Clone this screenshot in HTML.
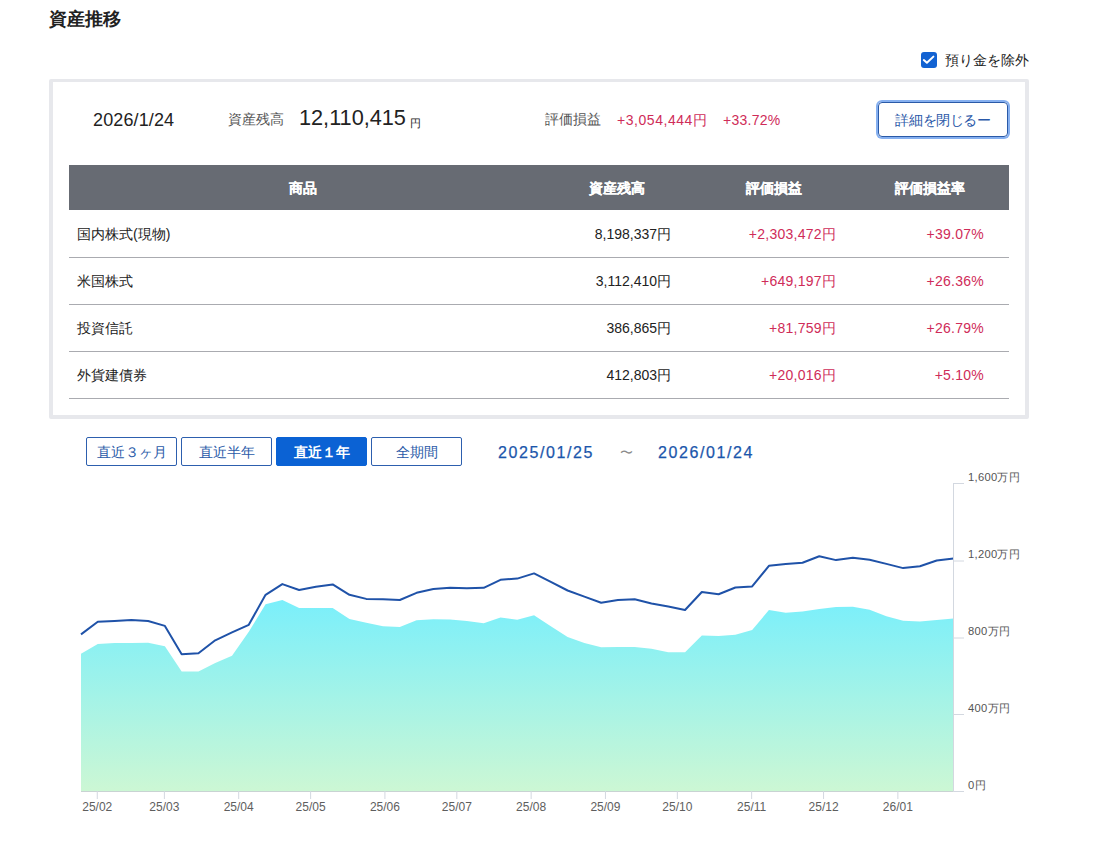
<!DOCTYPE html>
<html lang="ja"><head><meta charset="utf-8"><title>資産推移</title>
<style>
html,body{margin:0;padding:0;background:#fff;}
body{width:1095px;height:852px;position:relative;overflow:hidden;font-family:"Liberation Sans",sans-serif;color:#222;}
.a{position:absolute;white-space:nowrap;}
.title{left:49px;top:6px;font-size:18px;font-weight:bold;line-height:26px;color:#222;}
.chk{left:921px;top:52px;width:16px;height:15.6px;border-radius:3px;background:#1262d2;}
.chkl{left:945px;top:50px;font-size:14px;line-height:20px;color:#222;}
.card{left:49px;top:79px;width:972px;height:333px;border:4px solid #e7e8ec;border-top-width:3px;border-radius:2px;}
.date{left:93px;top:109px;font-size:18px;line-height:22px;color:#222;letter-spacing:0.12px;}
.lbl{font-size:14px;line-height:20px;color:#555;}
.big{left:299px;top:105px;font-size:21.7px;line-height:26px;color:#222;}
.yen{left:410px;top:115px;font-size:11px;line-height:16px;color:#222;}
.red{color:#cf2c59;font-size:14px;line-height:20px;letter-spacing:0.25px;}
.btn{left:878px;top:102px;width:128px;height:33px;border:1px solid #2a5aa8;border-radius:4px;box-shadow:0 0 0 2px #86b0f0;color:#2a58a8;font-size:14px;line-height:34px;letter-spacing:-0.35px;text-align:center;}
.thead{left:69px;top:165px;width:940px;height:45px;background:#676b73;}
.th{top:177.5px;color:#fff;font-weight:bold;font-size:14px;line-height:20px;-webkit-text-stroke:0.15px #fff;}
.row{left:69px;width:940px;height:1px;background:#aaabb0;}
.td{font-size:14px;line-height:20px;color:#222;}
.r{text-align:right;}
.pb{top:437px;width:89px;height:27px;border:1px solid #2d5fae;border-radius:2px;font-size:14px;line-height:28px;text-align:center;color:#2a5aa8;}
.pb.on{background:#0b62d4;border-color:#0b62d4;color:#fff;font-weight:bold;}
.dt{top:442.5px;font-size:16px;line-height:20px;color:#1b56ab;letter-spacing:1.6px;-webkit-text-stroke:0.25px #1b56ab;}
.xl{top:798.5px;width:60px;text-align:center;font-size:12px;line-height:16px;color:#5e5e5e;}
.yl{left:968px;font-size:11.2px;line-height:14px;color:#555;letter-spacing:0.3px;}
</style></head><body>
<div class="a title">資産推移</div>
<div class="a chk"><svg width="16" height="16" viewBox="0 0 16 16" style="display:block"><path d="M2.8 8.1 L5.9 10.8 L12.4 4.6" fill="none" stroke="#fff" stroke-width="2" stroke-linecap="round" stroke-linejoin="round"/></svg></div>
<div class="a chkl">預り金を除外</div>
<div class="a card"></div>
<div class="a date">2026/1/24</div>
<div class="a lbl" style="left:228px;top:109px">資産残高</div>
<div class="a big">12,110,415</div>
<div class="a yen">円</div>
<div class="a lbl" style="left:545px;top:109px">評価損益</div>
<div class="a red" style="left:617px;top:110px;letter-spacing:0.55px">+3,054,444円</div>
<div class="a red" style="left:723px;top:110px">+33.72%</div>
<div class="a btn">詳細を閉じるー</div>
<div class="a thead"></div>
<div class="a th" style="left:69px;width:468px;text-align:center">商品</div>
<div class="a th" style="left:537px;width:159px;text-align:center">資産残高</div>
<div class="a th" style="left:696px;width:155px;text-align:center">評価損益</div>
<div class="a th" style="left:851px;width:158px;text-align:center">評価損益率</div>
<div class="a td" style="left:77px;top:223.5px">国内株式(現物)</div><div class="a td r" style="right:424px;top:223.5px">8,198,337円</div><div class="a red r" style="right:259px;top:223.5px">+2,303,472円</div><div class="a red r" style="right:111px;top:223.5px">+39.07%</div><div class="a row" style="top:257px"></div>
<div class="a td" style="left:77px;top:270.5px">米国株式</div><div class="a td r" style="right:424px;top:270.5px">3,112,410円</div><div class="a red r" style="right:259px;top:270.5px">+649,197円</div><div class="a red r" style="right:111px;top:270.5px">+26.36%</div><div class="a row" style="top:304px"></div>
<div class="a td" style="left:77px;top:317.5px">投資信託</div><div class="a td r" style="right:424px;top:317.5px">386,865円</div><div class="a red r" style="right:259px;top:317.5px">+81,759円</div><div class="a red r" style="right:111px;top:317.5px">+26.79%</div><div class="a row" style="top:351px"></div>
<div class="a td" style="left:77px;top:364.5px">外貨建債券</div><div class="a td r" style="right:424px;top:364.5px">412,803円</div><div class="a red r" style="right:259px;top:364.5px">+20,016円</div><div class="a red r" style="right:111px;top:364.5px">+5.10%</div><div class="a row" style="top:398px"></div>
<div class="a pb" style="left:86px">直近３ヶ月</div>
<div class="a pb" style="left:181px">直近半年</div>
<div class="a pb on" style="left:276px">直近１年</div>
<div class="a pb" style="left:371px">全期間</div>
<div class="a dt" style="left:498px">2025/01/25</div>
<div class="a" style="left:620px;top:443px;font-size:13px;line-height:20px;color:#8a8a8a">〜</div>
<div class="a dt" style="left:658px">2026/01/24</div>
<svg class="a" style="left:0;top:0" width="1095" height="852" viewBox="0 0 1095 852">
<defs><linearGradient id="g" x1="0" y1="600" x2="0" y2="791" gradientUnits="userSpaceOnUse">
<stop offset="0" stop-color="#7aeffb"/><stop offset="1" stop-color="#ccf7d4"/></linearGradient></defs>
<polygon points="81.00,791 81.00,653.8 97.78,643.9 114.56,643.1 131.34,643.1 148.12,642.8 164.89,646.2 181.67,671.6 198.45,671.6 215.23,663.0 232.01,655.8 248.79,631.7 265.57,604.2 282.35,600.0 299.12,608.0 315.90,608.0 332.68,608.0 349.46,619.0 366.24,622.8 383.02,626.3 399.80,627.1 416.58,620.2 433.36,619.2 450.13,619.5 466.91,621.0 483.69,623.3 500.47,617.6 517.25,619.8 534.03,615.2 550.81,626.3 567.59,637.0 584.37,643.1 601.14,647.2 617.92,646.9 634.70,646.9 651.48,648.8 668.26,652.3 685.04,652.3 701.82,635.5 718.60,636.0 735.38,634.8 752.15,629.9 768.93,610.1 785.71,612.7 802.49,611.6 819.27,609.0 836.05,607.0 852.83,606.8 869.61,609.7 886.38,616.2 903.16,620.7 919.94,621.5 936.72,620.0 953.50,618.5 953.50,791" fill="url(#g)"/>
<polyline points="81.00,634.4 97.78,621.8 114.56,620.9 131.34,619.9 148.12,621.0 164.89,625.9 181.67,654.3 198.45,653.3 215.23,640.3 232.01,632.4 248.79,624.8 265.57,594.8 282.35,584.1 299.12,590.0 315.90,586.7 332.68,584.4 349.46,594.8 366.24,598.9 383.02,599.3 399.80,600.0 416.58,592.8 433.36,589.0 450.13,587.8 466.91,588.2 483.69,587.8 500.47,579.8 517.25,578.6 534.03,573.4 550.81,581.8 567.59,590.5 584.37,596.6 601.14,602.8 617.92,600.0 634.70,599.3 651.48,603.5 668.26,606.5 685.04,610.0 701.82,592.0 718.60,594.3 735.38,587.5 752.15,586.4 768.93,565.8 785.71,563.9 802.49,562.8 819.27,556.2 836.05,560.1 852.83,557.8 869.61,559.7 886.38,563.9 903.16,568.1 919.94,566.3 936.72,560.5 953.50,558.4" fill="none" stroke="#1f52a8" stroke-width="2" stroke-linejoin="round"/>
<g stroke="#d3d8e0" stroke-width="1">
<line x1="953.5" y1="483" x2="953.5" y2="791.5"/>
<line x1="81" y1="791.5" x2="953.5" y2="791.5" stroke="#c9d3d3"/>
<line x1="97.28" y1="791" x2="97.28" y2="799" /><line x1="164.39" y1="791" x2="164.39" y2="799" /><line x1="238.70" y1="791" x2="238.70" y2="799" /><line x1="310.61" y1="791" x2="310.61" y2="799" /><line x1="384.92" y1="791" x2="384.92" y2="799" /><line x1="456.83" y1="791" x2="456.83" y2="799" /><line x1="531.13" y1="791" x2="531.13" y2="799" /><line x1="605.44" y1="791" x2="605.44" y2="799" /><line x1="677.35" y1="791" x2="677.35" y2="799" /><line x1="751.65" y1="791" x2="751.65" y2="799" /><line x1="823.56" y1="791" x2="823.56" y2="799" /><line x1="897.87" y1="791" x2="897.87" y2="799" /><line x1="953.5" y1="483.5" x2="964" y2="483.5" /><line x1="953.5" y1="561.0" x2="964" y2="561.0" /><line x1="953.5" y1="638.0" x2="964" y2="638.0" /><line x1="953.5" y1="714.5" x2="964" y2="714.5" /><line x1="953.5" y1="791.5" x2="964" y2="791.5" />
</g></svg>
<div class="a xl" style="left:67.28px">25/02</div><div class="a xl" style="left:134.39px">25/03</div><div class="a xl" style="left:208.70px">25/04</div><div class="a xl" style="left:280.61px">25/05</div><div class="a xl" style="left:354.92px">25/06</div><div class="a xl" style="left:426.83px">25/07</div><div class="a xl" style="left:501.13px">25/08</div><div class="a xl" style="left:575.44px">25/09</div><div class="a xl" style="left:647.35px">25/10</div><div class="a xl" style="left:721.65px">25/11</div><div class="a xl" style="left:793.56px">25/12</div><div class="a xl" style="left:867.87px">26/01</div><div class="a yl" style="top:469.9px">1,600万円</div><div class="a yl" style="top:547.4px">1,200万円</div><div class="a yl" style="top:624.4px">800万円</div><div class="a yl" style="top:700.9px">400万円</div><div class="a yl" style="top:777.9px">0円</div>
</body></html>
